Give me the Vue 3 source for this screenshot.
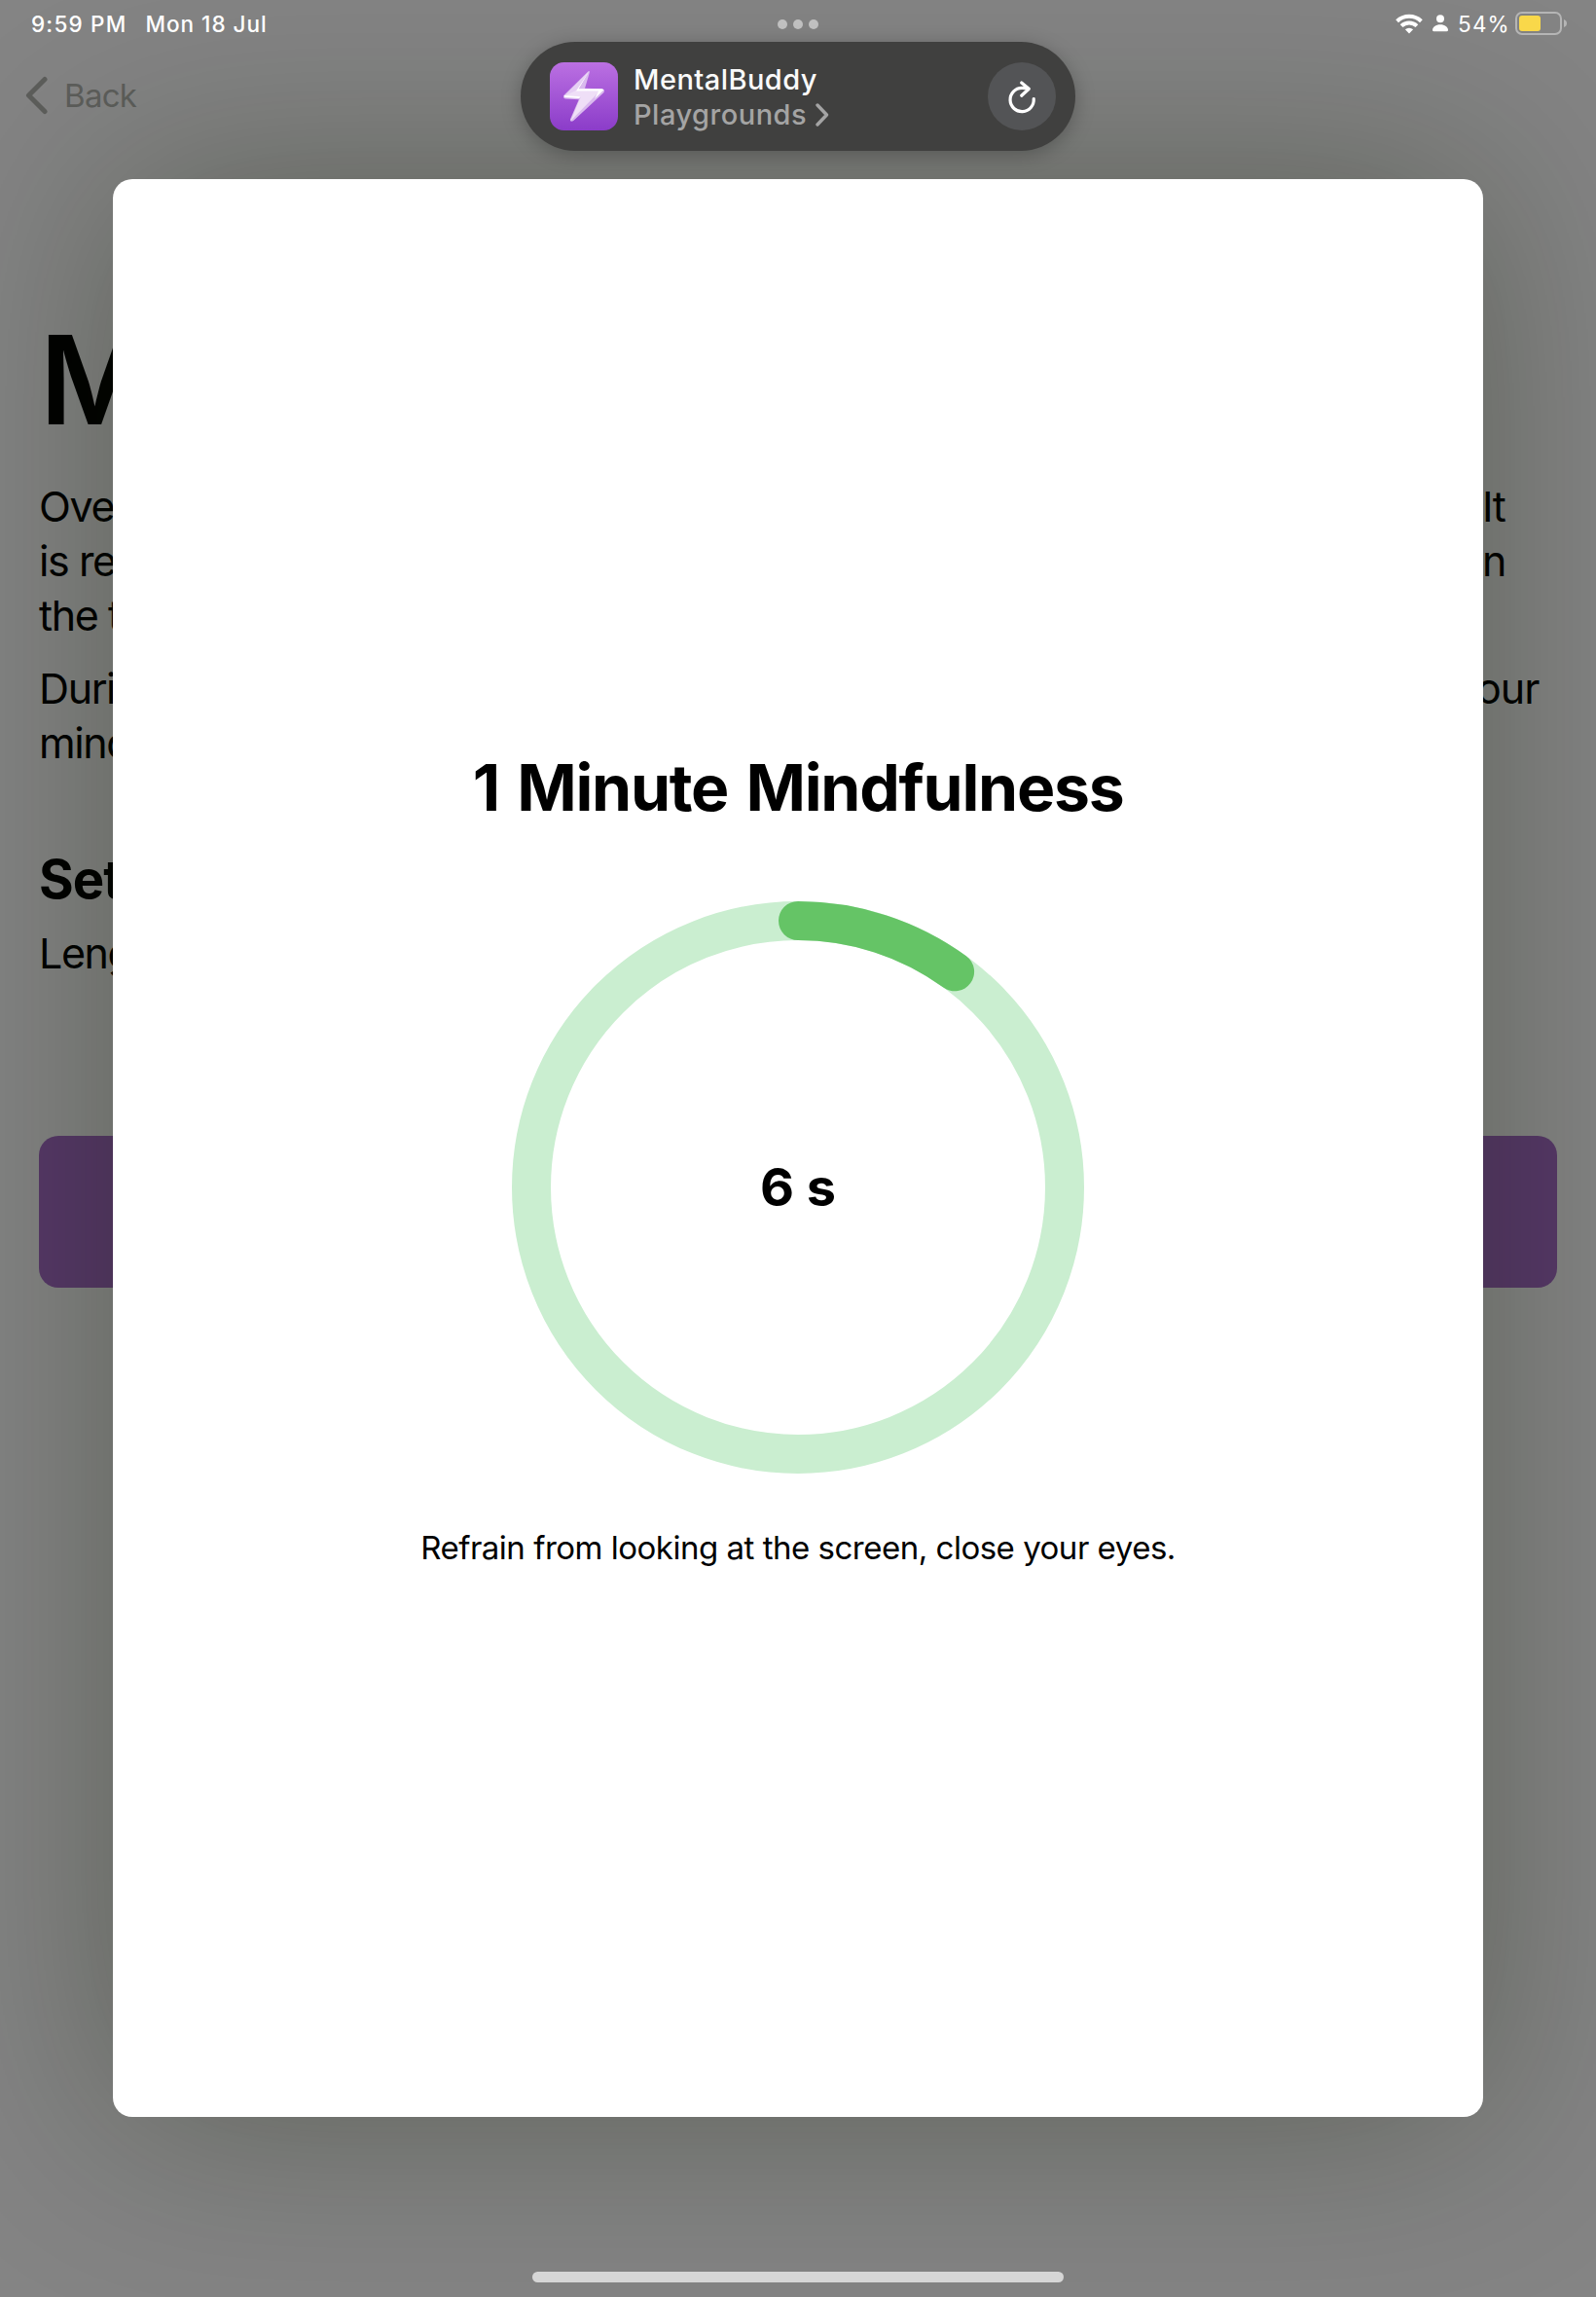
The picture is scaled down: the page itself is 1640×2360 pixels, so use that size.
<script setup>
import { computed } from 'vue'

const elapsed = 6
const total = 60
const radius = 274
const circumference = 2 * Math.PI * radius
const dash = computed(() => `${(elapsed / total) * circumference} ${circumference}`)

const intro = [
  ['Ove', 'It'],
  ['is re', 'n'],
  ['the t', ''],
]
const details = [
  ['Duri', 'our'],
  ['mind', ''],
]
</script>

<template>
  <div class="screen">
    <div class="page">
      <div class="status-space"></div>
      <nav class="nav">
        <svg class="chevron" width="24" height="40" viewBox="0 0 24 40">
          <path d="M20 3.5 3.5 20 20 36.5" fill="none" stroke="currentColor" stroke-width="5" stroke-linecap="round" stroke-linejoin="round" />
        </svg>
        <span class="back">Back</span>
      </nav>
      <h1 class="page-title">M</h1>
      <div class="copy">
        <div v-for="line in intro" :key="line[0]" class="line">
          <span>{{ line[0] }}</span><span class="end">{{ line[1] }}</span>
        </div>
      </div>
      <div class="copy second">
        <div v-for="line in details" :key="line[0]" class="line">
          <span>{{ line[0] }}</span><span class="end wide">{{ line[1] }}</span>
        </div>
      </div>
      <h2 class="settings">Set</h2>
      <div class="length">Leng</div>
      <div class="start"></div>
    </div>

    <header class="status">
      <span class="time">9:59 PM</span>
      <span class="date">Mon 18 Jul</span>
      <span class="spacer"></span>
      <svg class="wifi" width="28" height="21" viewBox="0 0 28 21">
        <g fill="none" stroke="#fff" stroke-width="4">
          <path d="M1.6 7.7A18 18 0 0 1 26.4 7.7" />
          <path d="M6.1 12.6A11.4 11.4 0 0 1 21.9 12.6" />
        </g>
        <path d="M14 20.4 9.9 16.3A6 6 0 0 1 18.1 16.3Z" fill="#fff" />
      </svg>
      <svg class="person" width="16" height="18" viewBox="0 0 16 18">
        <circle cx="8" cy="4.3" r="4" fill="#fff" />
        <path d="M1.6 17.3Q0 17.3 0 15.8C0 12.8 3.4 10.3 8 10.3S16 12.8 16 15.8Q16 17.3 14.4 17.3Z" fill="#fff" />
      </svg>
      <span class="percent">54%</span>
      <svg class="battery" width="54" height="24" viewBox="0 0 54 24">
        <rect x="1" y="1" width="46" height="22" rx="6" fill="none" stroke="#b5b5b5" stroke-width="2" />
        <rect x="4" y="4" width="22" height="16" rx="3" fill="#f9d84a" />
        <path d="M50 8Q53 9.200 53 12T50 16Z" fill="#b5b5b5" />
      </svg>
    </header>

    <main class="sheet">
      <h2 class="title">1 Minute Mindfulness</h2>
      <div class="timer">
        <svg class="ring" width="588" height="588" viewBox="0 0 588 588">
          <circle cx="294" cy="294" :r="radius" fill="none" stroke="#caeed0" stroke-width="40" />
          <circle cx="294" cy="294" :r="radius" fill="none" stroke="#65c466" stroke-width="40" stroke-linecap="round" :stroke-dasharray="dash" transform="rotate(-90 294 294)" />
        </svg>
        <span class="seconds">{{ elapsed }} s</span>
      </div>
      <p class="hint">Refrain from looking at the screen, close your eyes.</p>
    </main>

    <div class="dots"><i></i><i></i><i></i></div>

    <div class="pill">
      <svg width="70" height="70" viewBox="0 0 70 70">
        <defs>
          <linearGradient id="tile" x1="0" y1="0" x2="0" y2="1">
            <stop offset="0" stop-color="#bb70e2" />
            <stop offset="1" stop-color="#8b3cc9" />
          </linearGradient>
        </defs>
        <rect width="70" height="70" rx="14.500" fill="url(#tile)" />
        <path d="M39.500 9.300Q41.200 8.500 40.800 10.500L36 26.800 53.500 27.300Q57 28 55.500 31L24 60.300Q20.500 61.800 21 58.500L29.800 38.300 16 37.600Q13 36.500 14.500 33.700Z" fill="#d9b9ee" />
        <path d="M40 9.400 15 34.700 31.500 36 21.300 60.300 51 30 28.500 29Z" fill="#efdff7" />
        <path d="M40.500 9.400 27.800 28.400 15 34.700Z" fill="#e6cff4" />
        <path d="M40.300 9.400 27 29.500 50 29.800 46 37.500 55.500 28.300 53.500 27.300 29.500 27.300ZM14.500 34 31 35.300 30.500 37 15.500 36Z" fill="#fff" />
      </svg>
      <div class="names">
        <div class="app">MentalBuddy</div>
        <div class="host">
          <span>Playgrounds</span>
          <svg width="14" height="26" viewBox="0 0 14 26">
            <path d="M2 3 11.500 13 2 23" fill="none" stroke="currentColor" stroke-width="3.400" stroke-linecap="round" stroke-linejoin="round" />
          </svg>
        </div>
      </div>
      <div class="reload">
        <svg width="70" height="70" viewBox="0 0 70 70">
          <path d="M47.200 37.500A12.100 12.100 0 1 1 35 26.400Q38.500 26.400 42 27.200M34.700 21 42.300 27.200 34.700 34.200" fill="none" stroke="#fff" stroke-width="3.200" stroke-linecap="round" stroke-linejoin="round" />
        </svg>
      </div>
    </div>

    <div class="home"></div>
  </div>
</template>

<style>
body {
  margin: 0;
}
</style>

<style scoped>
.screen {
  position: relative;
  width: 1640px;
  height: 2360px;
  overflow: hidden;
  background: #848484;
  color: #000;
  font-family: Inter, "Liberation Sans", sans-serif;
}
h1, h2, p {
  margin: 0;
}
.page {
  display: flex;
  flex-direction: column;
}
.status-space {
  height: 48px;
}
.nav {
  display: flex;
  align-items: center;
  height: 100px;
  padding-left: 26px;
  color: #5d5e5b;
}
.back {
  margin-left: 16px;
  font-size: 33px;
  letter-spacing: -0.7px;
}
.page-title {
  margin: 167px 0 0 41px;
  font-size: 126px;
  font-weight: 600;
  line-height: 150px;
  transform: scaleX(0.97);
  transform-origin: left;
}
.copy {
  margin-top: 27px;
  padding-left: 40px;
}
.copy.second {
  margin-top: 19px;
}
.line {
  display: flex;
  justify-content: space-between;
  height: 56px;
  font-size: 43px;
  line-height: 56px;
  letter-spacing: -1.4px;
}
.end {
  width: 117px;
}
.end.wide {
  width: 123px;
  letter-spacing: -1px;
}
.settings {
  margin: 80px 0 0 40px;
  font-size: 54.5px;
  font-weight: 700;
  line-height: 64px;
  letter-spacing: -1px;
}
.length {
  margin: 16px 0 0 40px;
  font-size: 43px;
  line-height: 56px;
  letter-spacing: -1.4px;
}
.start {
  height: 156px;
  margin: 160px 40px 0;
  border-radius: 20px;
  background: #573869;
}
.status {
  position: absolute;
  inset: 0 0 auto;
  z-index: 2;
  display: flex;
  align-items: center;
  height: 48px;
  padding: 0 29px 0 32px;
  color: #fff;
  font-size: 22.5px;
  font-weight: 500;
}
.time {
  letter-spacing: 1.2px;
}
.date {
  margin-left: 19px;
  letter-spacing: 1px;
}
.spacer {
  flex: 1;
}
.person {
  margin-left: 10px;
}
.percent {
  width: 59px;
  margin-left: 10px;
  font-weight: 400;
  letter-spacing: 1.2px;
}
.sheet {
  position: absolute;
  top: 184px;
  left: 116px;
  display: flex;
  flex-direction: column;
  align-items: center;
  box-sizing: border-box;
  width: 1408px;
  height: 1991px;
  padding-top: 585px;
  border-radius: 20px;
  background: #fff;
  box-shadow: 0 0 212px rgba(14, 26, 0, 0.33);
}
.title {
  font-size: 66px;
  font-weight: 700;
  line-height: 80px;
  letter-spacing: -1.25px;
  word-spacing: 4px;
}
.timer {
  display: grid;
  place-items: center;
  margin-top: 77px;
}
.ring,
.seconds {
  grid-area: 1 / 1;
}
.ring {
  display: block;
}
.seconds {
  padding-bottom: 2px;
  font-size: 54px;
  font-weight: 700;
}
.hint {
  margin-top: 54px;
  font-size: 33px;
  line-height: 44px;
  letter-spacing: -0.49px;
}
.dots {
  position: absolute;
  top: 19.5px;
  left: 799px;
  z-index: 2;
  display: flex;
  gap: 6px;
}
.dots i {
  width: 10px;
  height: 10px;
  border-radius: 50%;
  background: #c0c0c0;
}
.pill {
  position: absolute;
  top: 43px;
  left: 535px;
  z-index: 3;
  display: flex;
  align-items: center;
  box-sizing: border-box;
  width: 570px;
  height: 112px;
  padding: 0 20px 0 30px;
  border-radius: 56px;
  background: #40403f;
  box-shadow: 0 4px 20px rgba(0, 0, 0, 0.26);
}
.names {
  flex: 1;
  margin-left: 16px;
  padding-top: 1px;
  font-size: 29px;
  font-weight: 500;
  line-height: 36px;
}
.app {
  color: #fafafa;
  letter-spacing: 0.45px;
}
.host {
  display: flex;
  align-items: center;
  gap: 9px;
  color: #a4a4a4;
  letter-spacing: 0.5px;
}
.reload {
  width: 70px;
  height: 70px;
  border-radius: 50%;
  background: #535456;
}
.home {
  position: absolute;
  left: 547px;
  top: 2334px;
  width: 546px;
  height: 11px;
  border-radius: 6px;
  background: #d6d6d6;
}
</style>
